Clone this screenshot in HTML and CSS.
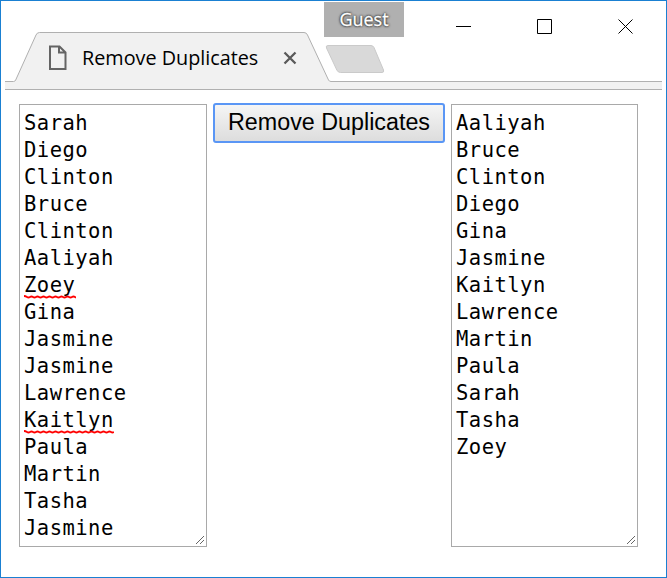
FILE: index.html
```html
<!DOCTYPE html>
<html lang="en">
<head>
<meta charset="utf-8">
<title>Remove Duplicates</title>
<link rel="stylesheet" href="styles.css">
</head>
<body>
<div class="window">
  <header class="titlebar">
    <svg class="frame" width="667" height="92" viewBox="0 0 667 92" aria-hidden="true">
      <path d="M5 81.5H13.500Q15 81.500 15.700 80L36 35Q37 32.500 39.500 32.500H304Q306.500 32.500 307.500 35L328.500 80Q329.300 81.500 331 81.500H662V89.500H5Z" fill="#f1f1f1"/>
      <path d="M5 81.500H13.500Q15 81.500 15.700 80L36 35Q37 32.500 39.500 32.500H304Q306.500 32.500 307.500 35L328.500 80Q329.300 81.500 331 81.500H662M5 89.500H662" fill="none" stroke="#b0b0b0"/>
      <path d="M328 45.500H371Q373 45.500 374 47.500L383.500 70Q384.300 72.500 382 72.500H340.500Q338 72.500 336.800 70L326.500 48Q325.500 45.500 328 45.500Z" fill="#d9d9d9" stroke="#cacaca"/>
    </svg>
    <div class="tab">
      <svg class="page-icon" width="19" height="25" viewBox="0 0 19 25"><path d="M2 1.500H11.500L17.500 7.500V24H2ZM11 1.500V7.500H17.500" fill="none" stroke="#646464" stroke-width="2"/></svg>
      <span class="tab-title">Remove Duplicates</span>
      <svg class="tab-close" width="14" height="14" viewBox="0 0 14 14"><path d="M1.500 1.500L12.500 12.500M12.500 1.500L1.500 12.500" stroke="#5a5a5a" stroke-width="2.300"/></svg>
    </div>
    <div class="guest">Guest</div>
    <svg class="controls" width="178" height="16" viewBox="0 0 178 16"><path d="M0 7.500H15M81.500 .5H95.500V14.500H81.500ZM162.500 .5L176.500 14.500M176.500 .5L162.500 14.500" fill="none" stroke="#000"/></svg>
  </header>
  <main class="content">
    <div class="box">
      <div>Sarah</div><div>Diego</div><div>Clinton</div><div>Bruce</div><div>Clinton</div><div>Aaliyah</div>
      <div><span class="misspelled">Zoey<svg class="squiggle" width="52" height="4"><use href="#wave"/></svg></span></div>
      <div>Gina</div><div>Jasmine</div><div>Jasmine</div><div>Lawrence</div>
      <div><span class="misspelled">Kaitlyn<svg class="squiggle" width="90" height="4"><use href="#wave"/></svg></span></div>
      <div>Paula</div><div>Martin</div><div>Tasha</div><div>Jasmine</div>
      <svg class="grip" width="8" height="8"><path d="M0 8L8 0M4 8L8 4" stroke="#666"/></svg>
    </div>
    <button class="action">Remove Duplicates</button>
    <div class="box result">
      <div>Aaliyah</div><div>Bruce</div><div>Clinton</div><div>Diego</div><div>Gina</div><div>Jasmine</div><div>Kaitlyn</div><div>Lawrence</div><div>Martin</div><div>Paula</div><div>Sarah</div><div>Tasha</div><div>Zoey</div>
      <svg class="grip" width="8" height="8"><path d="M0 8L8 0M4 8L8 4" stroke="#666"/></svg>
    </div>
  </main>
</div>
<svg class="defs" width="0" height="0"><defs>
  <path id="wave" d="M0 1Q1.500 1 3 2T6 2T9 2T12 2T15 2T18 2T21 2T24 2T27 2T30 2T33 2T36 2T39 2T42 2T45 2T48 2T51 2T54 2T57 2T60 2T63 2T66 2T69 2T72 2T75 2T78 2T81 2T84 2T87 2T90 2" fill="none" stroke="#f00" stroke-width="1.800"/>
</defs></svg>
</body>
</html>
```
FILE: styles.css
```css
* { box-sizing: border-box; }
body { margin: 0; background: #fff; color: #000; }
.window { position: relative; width: 667px; height: 578px; border: 1px solid #1a80d2; overflow: hidden; }
.titlebar { height: 103px; }
.frame { position: absolute; left: -1px; top: -1px; }
.tab { position: absolute; left: 47px; top: 32px; height: 49px; display: flex; align-items: center; }
.tab-title { width: 178px; margin-left: 15px; font: 19.8px/28px "Open Sans", sans-serif; white-space: nowrap; }
.tab-close { margin-left: 23px; }
.guest { position: absolute; left: 323px; top: 1px; width: 80px; height: 35px; background: #b0b0b0; color: #fff; font: 18px/35px "Open Sans", sans-serif; text-align: center; text-shadow: 0 0 2px #333, 0 0 2px #333, 0 0 3px #333; -webkit-text-stroke: .3px #fff; }
.controls { position: absolute; left: 455px; top: 18px; }
.content { display: flex; align-items: flex-start; padding-left: 18px; }
.box { position: relative; width: 188px; height: 443px; padding: 5px 4px 4px; border: 1px solid #a9a9a9; font: 20.5px/27px "DejaVu Sans Mono", monospace; letter-spacing: .48px; }
.result { width: 187px; }
.action { width: 232px; height: 40px; margin: -1px 6px 0; padding: 0 0 2px; border: 2px solid #5a96f5; border-radius: 3px; background: linear-gradient(#f5f5f5, #ddd); color: #000; font: 23.3px/34px "Liberation Sans", sans-serif; }
.misspelled { position: relative; }
.squiggle { position: absolute; left: 0; bottom: -2px; overflow: hidden; }
.grip { position: absolute; right: 2px; bottom: 2px; }
.defs { position: absolute; }
```
